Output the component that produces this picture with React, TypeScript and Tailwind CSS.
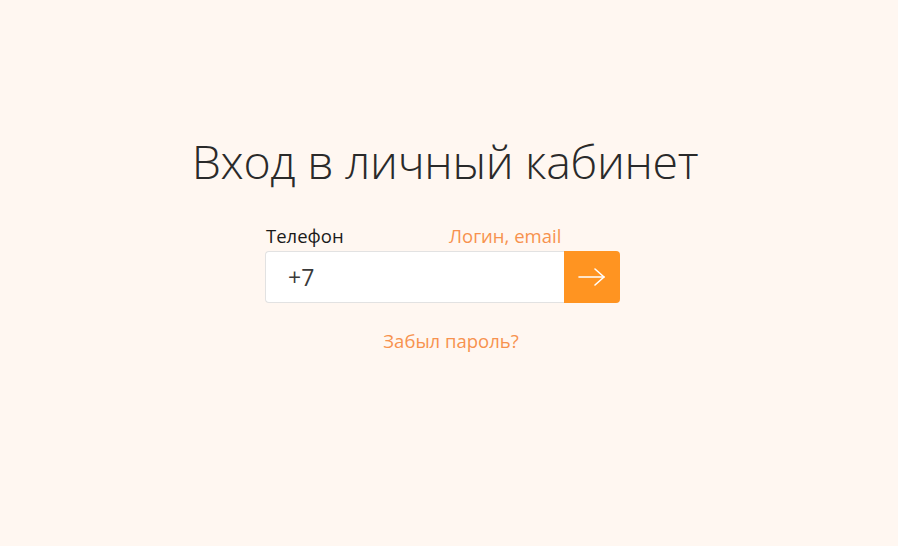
import React from "react";

export default function App() {
  return (
    <div
      className="w-full h-[546px] bg-[#fff7f1] flex flex-col items-center"
      style={{ fontFamily: '"Open Sans", "Noto Sans", sans-serif' }}
    >
      <h1 className="mt-[130px] text-[46.5px] leading-[62px] font-light text-[#2a2a2a] tracking-[-0.3px] ml-[-8px]">
        Вход в личный кабинет
      </h1>
      <div className="mt-[30px] w-[355px] ml-[-13px]">
        <div className="flex items-end h-[26px] text-[18.5px] leading-[24px]">
          <span className="w-[184px] pl-[1px] text-[#1a1a1a]">Телефон</span>
          <span className="text-[#f7924e]">Логин, email</span>
        </div>
        <div className="mt-[3px] flex h-[52px]">
          <div className="flex-1 bg-white border border-[#e2e2e2] border-r-0 rounded-l-[4px] flex items-center pl-[22px] text-[23px] text-[#3a3a3a]">
            +7
          </div>
          <button className="w-[56px] h-full bg-[#ff9421] rounded-r-[4px] flex items-center justify-center">
            <svg width="30" height="20" viewBox="0 0 30 20" fill="none" stroke="white" strokeWidth="1.6" strokeLinecap="round" strokeLinejoin="round">
              <path d="M2 10H27" />
              <path d="M18 2L27 10L18 18" />
            </svg>
          </button>
        </div>
        <div className="mt-[26px] text-center text-[18.5px] leading-[24px] text-[#f7924e] ml-[17px]">Забыл пароль?</div>
      </div>
    </div>
  );
}
